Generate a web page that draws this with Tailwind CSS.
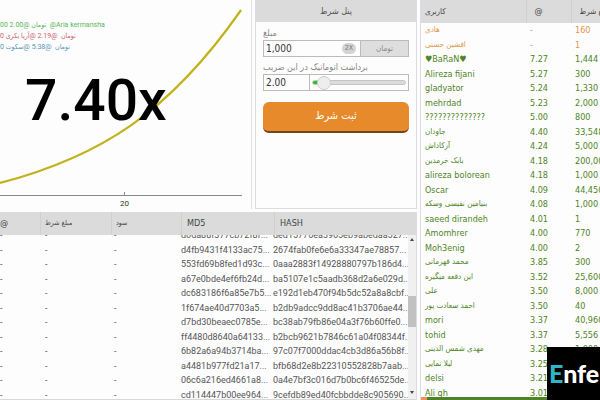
<!DOCTYPE html>
<html lang="en">
<head>
    <meta charset="UTF-8">
    <meta name="viewport" content="width=device-width, initial-scale=1.0">
    <title>Crash</title>
    <script src="https://cdn.jsdelivr.net/npm/@tailwindcss/browser@4"></script>
</head>
<body class="relative flex h-screen overflow-hidden bg-[#fdfdfd] font-['DejaVu_Sans_Condensed','DejaVu_Sans',sans-serif] text-[9px] text-[#555]">
    <main class="flex min-w-0 flex-1 flex-col">
        <div class="flex h-[209px] shrink-0">
            <!-- Chart -->
            <section class="relative min-w-0 flex-1 border-r border-[#e0e0e4]">
                <svg class="absolute inset-0 h-full w-full" viewBox="0 0 252 209" preserveAspectRatio="none" fill="none">
                    <path d="M0 183 C100 157 170 113 242 10" stroke="#c0b31c" stroke-width="2.2"/>
                    <path d="M0 195.5 H243 M125 192 V196" stroke="#888"/>
                </svg>
                <ul class="relative pt-5 font-[Roboto,'DejaVu_Sans_Condensed',sans-serif] text-[7px] leading-[11px] whitespace-nowrap">
                    <li class="text-[#58b558]">00 2.00@ <bdi>تومان</bdi> &nbsp;@Aria kermansha</li>
                    <li class="text-[#cc6270]">0 <bdi>آریا بکری</bdi>@ 2.19@ &nbsp;<bdi>تومان</bdi></li>
                    <li class="text-[#5a96b5]">0 <bdi>سکوت</bdi>@ 5.38@ &nbsp;<bdi>تومان</bdi></li>
                </ul>
                <p class="relative mt-[14px] pl-[25px] font-[Roboto,sans-serif] text-[57px] leading-[68px] font-medium text-black">7.40x</p>
                <span class="absolute bottom-0 left-[120px] font-[Roboto,sans-serif] text-[8px] leading-[10px] text-[#333]">20</span>
            </section>

            <!-- Bet panel -->
            <form class="mx-[3px] w-[162px] shrink-0 border-x border-b border-[#dcdce0]">
                <h2 class="h-[22px] bg-[#dbdbdb] text-center text-[9px] leading-[22px]">پنل شرط</h2>
                <div class="px-[7px] pt-[2px]">
                    <label for="amount" class="block pt-[3px] leading-[13px] text-[#888]">مبلغ</label>
                    <div class="flex h-[17px] border border-[#bbb]">
                        <input id="amount" type="text" value="1,000" class="w-0 min-w-0 flex-1 px-[2px] text-[10px] text-[#333]">
                        <button type="button" class="mr-1 h-[11px] w-[14px] self-center rounded-full bg-[#d4d4d4] text-[7px] leading-[11px] text-[#777]">2X</button>
                        <span class="w-12 border-l border-[#bbb] bg-[#dedede] text-center text-[8px] leading-[15px] text-[#888]">تومان</span>
                    </div>
                    <label for="cashout" class="block pt-1 leading-[13px] text-[#888]">برداشت اتوماتیک در این ضریب</label>
                    <div class="flex h-[17px] border border-[#bbb]">
                        <input id="cashout" type="text" value="2.00" class="w-[46px] border-r border-[#bbb] px-[2px] text-[10px] text-[#333]">
                        <div class="mx-[2px] flex min-w-0 flex-1 items-center">
                            <input type="range" aria-label="Cashout" min="0" max="100" value="5" class="h-[5px] w-full appearance-none rounded-full border border-[#c4c4c4] bg-linear-to-r from-[#1fc81f] from-8% to-[#dcdcdc] to-8% [&::-webkit-slider-thumb]:h-[14px] [&::-webkit-slider-thumb]:w-[14px] [&::-webkit-slider-thumb]:appearance-none [&::-webkit-slider-thumb]:rounded-full [&::-webkit-slider-thumb]:border [&::-webkit-slider-thumb]:border-[#ccc] [&::-webkit-slider-thumb]:bg-[#eee]">
                        </div>
                    </div>
                    <button type="button" class="mt-[11px] block h-[31px] w-full rounded-md border-b-2 border-[#6f451c] bg-[#e68a2b] text-[11px] text-white">ثبت شرط</button>
                </div>
            </form>
        </div>

        <!-- History -->
        <section class="mt-[3px] mr-[3px] flex min-h-0 flex-1 flex-col border-r border-[#dcdce0]">
            <div class="flex h-[23px] shrink-0 bg-[#dbdbdb] leading-[23px] text-[#444]">
                <span class="w-10">@</span>
                <span class="w-[71px] border-l border-[#d0d0d0] pl-1 text-[7px]">مبلغ شرط</span>
                <span class="w-[70px] border-l border-[#d0d0d0] pl-1 text-[7px]">سود</span>
                <span class="w-[93px] border-l border-[#d0d0d0] pl-[5px]">MD5</span>
                <span class="flex-1 border-l border-[#d0d0d0] pl-[5px]">HASH</span>
            </div>
            <div class="flex min-h-0 flex-1 border-b border-[#d8d8d8]">
                <div class="min-w-0 flex-1 overflow-hidden">
                    <table class="-mt-[7px] w-full table-fixed font-[Roboto,sans-serif]">
                        <colgroup><col class="w-[45px]"><col class="w-[69px]"><col class="w-[67px]"><col class="w-[92px]"><col></colgroup>
                        <tbody id="history"></tbody>
                    </table>
                </div>
                <div class="flex w-2 shrink-0 flex-col items-center bg-[#f0f0f0]">
                    <svg class="mt-[3px] h-1 w-1 shrink-0" viewBox="0 0 4 4"><path d="M0 3 L2 0 L4 3Z" fill="#444"/></svg>
                    <div class="mt-[54px] h-[31px] w-full bg-[#c1c1c1]"></div>
                    <svg class="mt-auto mb-[5px] h-1 w-1 shrink-0" viewBox="0 0 4 4"><path d="M0 1 L2 4 L4 1Z" fill="#444"/></svg>
                </div>
            </div>
        </section>
    </main>

    <!-- Players -->
    <aside class="relative w-[180px] shrink-0 overflow-hidden border-l border-[#dcdce0]">
        <table class="w-full table-fixed text-[#4f8426]">
            <colgroup><col class="w-[105px]"><col class="w-[45px]"><col></colgroup>
            <thead>
                <tr class="h-[23px] bg-[#dbdbdb] text-left whitespace-nowrap text-[#444]">
                    <th class="p-0 pl-1 text-[8px] font-normal">کاربری</th>
                    <th class="border-l border-[#d0d0d0] p-0 pl-2 font-normal">@</th>
                    <th class="border-l border-[#d0d0d0] p-0 pl-2 text-[8px] font-normal">مبلغ شرط</th>
                </tr>
            </thead>
            <tbody id="players"></tbody>
        </table>
        <div class="absolute inset-x-0 bottom-0 h-[3px] border-l-[6px] border-[#f0915c] bg-[#4f8426]"></div>
    </aside>

    <!-- Watermark -->
    <div class="absolute right-0 bottom-0 h-[53px] w-[53px] overflow-hidden bg-black pt-3 pl-[2px] font-[Lato,sans-serif] text-[25px] leading-7 font-black whitespace-nowrap text-white"><span class="text-[#2fb5c4]">E</span>nfe</div>

    <script>
        const history = [
            ['d0da88f377cb72f8f...', 'ded15776ea3965eb9abedaa527...'],
            ['d4fb9431f4133ac75...', '2674fab0fe6e6a33347ae78857...'],
            ['553fd69b8fed1d93c...', '0aaa2883f14928880797b186d4...'],
            ['a67e0bde4ef6fb24d...', 'ba5107e1c5aadb368d2a6e029d...'],
            ['dc683186f6a85e7b5...', 'e192d1eb470f94b5dc52a8a8cbf...'],
            ['1f674ae40d7703a5...', 'b2db9adcc9dd8ac41b3706ae44...'],
            ['d7bd30beaec0785e...', 'bc38ab79fb86e04a3f76b60ffe0...'],
            ['ff4480d8640a64133...', 'b2bcb9621b7846c61a04f08344f...'],
            ['6b82a6a94b3714ba...', '97c07f7000ddac4cb3d86a56b8f...'],
            ['a4481b977fd21a17...', 'bfb68d2e8b22310552828b7aab...'],
            ['06c6a216ed4661a8...', '0a4e7bf3c016d7b0bc6f46525de...'],
            ['cd114447b00ee964...', '9cefdb89ed40fcbbdde8c905690...']
        ];
        const players = [
            ['هادی', '-', '160'], ['افشین حسنی', '-', '1'],
            ['♥BaRaN♥', '7.27', '1,444'], ['Alireza fijani', '5.27', '300'],
            ['gladyator', '5.24', '1,330'], ['mehrdad', '5.23', '2,000'],
            ['??????????????', '5.00', '800'], ['جاودان', '4.40', '33,548'],
            ['آرکاداش', '4.24', '5,000'], ['بابک خرمدین', '4.18', '200,000'],
            ['alireza bolorean', '4.18', '1,000'], ['Oscar', '4.09', '44,450'],
            ['بنیامین نفیسی وسکه', '4.08', '1,000'], ['saeed dirandeh', '4.01', '1'],
            ['Amomhrer', '4.00', '770'], ['Moh3enig', '4.00', '2'],
            ['محمد قهرمانی', '3.85', '300'], ['این دفعه میگیره', '3.52', '25,600'],
            ['علی', '3.50', '8,000'], ['احمد سعادت پور', '3.50', '40'],
            ['mori', '3.37', '40,960'], ['tohid', '3.37', '5,556'],
            ['مهدی شمس الدینی', '3.28', '1,000'], ['لیلا نمایی', '3.25', '1,000'],
            ['delsi', '3.21', '1,000'], ['Ali gh', '3.01', '1,000']
        ];
        const isPersian = name => /[\u0600-\u06ff]/.test(name);

        document.getElementById('history').innerHTML = history.map(([md5, hash]) => `
            <tr class="odd:h-[14px] even:h-[15px] leading-3 whitespace-nowrap">
                <td class="p-0">-</td><td class="p-0">-</td><td class="p-0">-</td>
                <td class="p-0">${md5}</td><td class="p-0">${hash}</td>
            </tr>`).join('');

        document.getElementById('players').innerHTML = players.map(([name, rate, bet]) => `
            <tr class="odd:h-[14px] even:h-[15px] leading-3 whitespace-nowrap ${rate === '-' ? 'text-[#dd9750]' : ''}">
                <td class="p-0 pl-1 ${isPersian(name) ? 'text-[8px]' : ''}">${name}</td><td class="p-0 pl-1">${rate}</td><td class="p-0 pl-1">${bet}</td>
            </tr>`).join('');
    </script>
</body>
</html>
